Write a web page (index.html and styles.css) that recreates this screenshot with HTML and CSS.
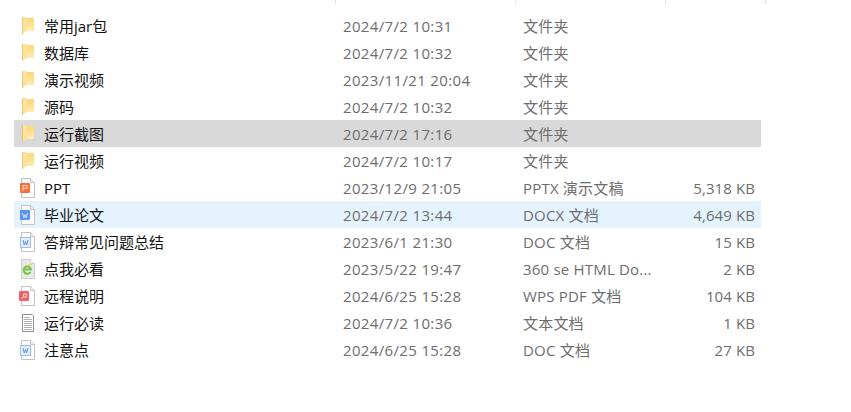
FILE: index.html
```html
<!DOCTYPE html>
<html lang="zh-CN">
<head>
    <meta charset="UTF-8">
    <title>文件列表</title>
    <link rel="stylesheet" href="styles.css">
</head>
<body>
    <svg class="defs" width="0" height="0">
        <defs>
            <linearGradient id="folder-fill" x1="0" y1="0" x2="0" y2="1">
                <stop offset="0" stop-color="#fcd876"/>
                <stop offset="1" stop-color="#fdebb4"/>
            </linearGradient>
        </defs>
        <symbol id="folder" viewBox="0 1 16 18">
            <path d="M6 2h9v13H6z" fill="url(#folder-fill)"/>
            <path d="M3 1h4l1 1v12.500L3.500 18H3z" fill="#fbe39f"/>
            <path d="M3 1h1v17H3z" fill="#e9c873"/>
        </symbol>
        <symbol id="page" viewBox="0 0 18 20">
            <path d="M2.500 .5h9l4 4v15h-13z" fill="#fff" stroke="#c4c4c4"/>
            <path d="M11.500 .5v4h4" fill="#eee" stroke="#c4c4c4"/>
        </symbol>
    </svg>
    <div class="list">
        <div class="header">
            <span class="tick"></span><span class="tick"></span><span class="tick"></span><span class="tick"></span>
        </div>

        <div class="row">
            <span class="icon"><svg width="16" height="18"><use href="#folder"/></svg></span>
            <span class="name">常用jar包</span><span class="date">2024/7/2 10:31</span><span class="type">文件夹</span><span class="size"></span>
        </div>
        <div class="row">
            <span class="icon"><svg width="16" height="18"><use href="#folder"/></svg></span>
            <span class="name">数据库</span><span class="date">2024/7/2 10:32</span><span class="type">文件夹</span><span class="size"></span>
        </div>
        <div class="row">
            <span class="icon"><svg width="16" height="18"><use href="#folder"/></svg></span>
            <span class="name">演示视频</span><span class="date">2023/11/21 20:04</span><span class="type">文件夹</span><span class="size"></span>
        </div>
        <div class="row">
            <span class="icon"><svg width="16" height="18"><use href="#folder"/></svg></span>
            <span class="name">源码</span><span class="date">2024/7/2 10:32</span><span class="type">文件夹</span><span class="size"></span>
        </div>
        <div class="row row-gray">
            <span class="icon"><svg width="16" height="18"><use href="#folder"/></svg></span>
            <span class="name">运行截图</span><span class="date">2024/7/2 17:16</span><span class="type">文件夹</span><span class="size"></span>
        </div>
        <div class="row">
            <span class="icon"><svg width="16" height="18"><use href="#folder"/></svg></span>
            <span class="name">运行视频</span><span class="date">2024/7/2 10:17</span><span class="type">文件夹</span><span class="size"></span>
        </div>
        <div class="row">
            <span class="icon"><svg width="18" height="20"><use href="#page"/><rect x="1" y="5" width="10" height="10" rx="1" fill="#f4733f"/><path d="M4 13V7.500h4v3H4" fill="none" stroke="#fbd3c2"/></svg></span>
            <span class="name">PPT</span><span class="date">2023/12/9 21:05</span><span class="type">PPTX 演示文稿</span><span class="size">5,318 KB</span>
        </div>
        <div class="row row-blue">
            <span class="icon"><svg width="18" height="20"><use href="#page"/><rect x="1" y="5" width="10" height="10" rx="1" fill="#5c93ee"/><path d="M3.500 8l1.300 5L6 9.500 7.200 13l1.300-5" fill="none" stroke="#cfe0fb"/></svg></span>
            <span class="name">毕业论文</span><span class="date">2024/7/2 13:44</span><span class="type">DOCX 文档</span><span class="size">4,649 KB</span>
        </div>
        <div class="row">
            <span class="icon"><svg width="18" height="20"><use href="#page"/><rect x="1.500" y="5.500" width="10" height="10" fill="#e4eefc" stroke="#9dbdf2"/><path d="M4 8l1.300 5 1.200-3.500L7.700 13 9 8" fill="none" stroke="#5f90e6"/></svg></span>
            <span class="name">答辩常见问题总结</span><span class="date">2023/6/1 21:30</span><span class="type">DOC 文档</span><span class="size">15 KB</span>
        </div>
        <div class="row">
            <span class="icon"><svg width="18" height="20"><path d="M2.500 .5h9l4 4v15h-13z" fill="#e9e9e9" stroke="#cfcfcf"/><path d="M11.500 .5v4h4" fill="#fff" stroke="#cfcfcf"/><path d="M11.500 13a3.700 3.700 0 1 1 .5-2.500H6" fill="none" stroke="#72c63c" stroke-width="2"/><path d="M6 7l7-1.500" stroke="#e8c94a"/></svg></span>
            <span class="name">点我必看</span><span class="date">2023/5/22 19:47</span><span class="type">360 se HTML Do...</span><span class="size">2 KB</span>
        </div>
        <div class="row">
            <span class="icon"><svg width="18" height="20"><use href="#page"/><rect x="0" y="5" width="10" height="10" rx="1" fill="#ef6469"/><path d="M2.500 12.500l2-1.500V8h3v3H4.500" fill="none" stroke="#fbd5d6"/></svg></span>
            <span class="name">远程说明</span><span class="date">2024/6/25 15:28</span><span class="type">WPS PDF 文档</span><span class="size">104 KB</span>
        </div>
        <div class="row">
            <span class="icon"><svg width="18" height="20"><path d="M3.500 1.500h10l1 1v16h-11z" fill="#fff" stroke="#8f8f8f"/><path d="M5 4.500h6M5 6.500h8M5 8.500h8M5 10.500h8M5 12.500h8M5 14.500h8M5 16.500h8" stroke="#b0b0b0"/></svg></span>
            <span class="name">运行必读</span><span class="date">2024/7/2 10:36</span><span class="type">文本文档</span><span class="size">1 KB</span>
        </div>
        <div class="row">
            <span class="icon"><svg width="18" height="20"><use href="#page"/><rect x="1.500" y="5.500" width="10" height="10" fill="#e4eefc" stroke="#9dbdf2"/><path d="M4 8l1.300 5 1.200-3.500L7.700 13 9 8" fill="none" stroke="#5f90e6"/></svg></span>
            <span class="name">注意点</span><span class="date">2024/6/25 15:28</span><span class="type">DOC 文档</span><span class="size">27 KB</span>
        </div>
    </div>
</body>
</html>
```

FILE: styles.css
```css
body {
    margin: 0;
    background: #fff;
    font-family: "Open Sans", "Noto Sans", "Noto Sans CJK SC", sans-serif;
    font-size: 15px;
}
.defs {
    position: absolute;
}
.list {
    width: 747px;
    margin-left: 14px;
}
.header {
    height: 12px;
    position: relative;
}
.tick {
    position: absolute;
    top: 0;
    width: 1px;
    height: 4px;
    background: #e5e5e5;
}
.tick:nth-child(1) { left: 321px; }
.tick:nth-child(2) { left: 501px; }
.tick:nth-child(3) { left: 651px; }
.tick:nth-child(4) { left: 751px; }
.row {
    display: grid;
    grid-template-columns: 30px 299px 180px 130px 102px;
    align-items: center;
    height: 27px;
    line-height: 25px;
    color: #6d6d6d;
    white-space: nowrap;
}
.row-gray {
    background: #d9d9d9;
}
.row-blue {
    background: #e5f3ff;
}
.icon {
    display: flex;
    padding-left: 5px;
}
.name, .date, .type, .size {
    padding-top: 2px;
}
.name {
    color: #111;
}
.date {
    letter-spacing: 0.35px;
}
.type {
    letter-spacing: 0.2px;
}
.size {
    text-align: right;
    letter-spacing: 0.1px;
}
```
